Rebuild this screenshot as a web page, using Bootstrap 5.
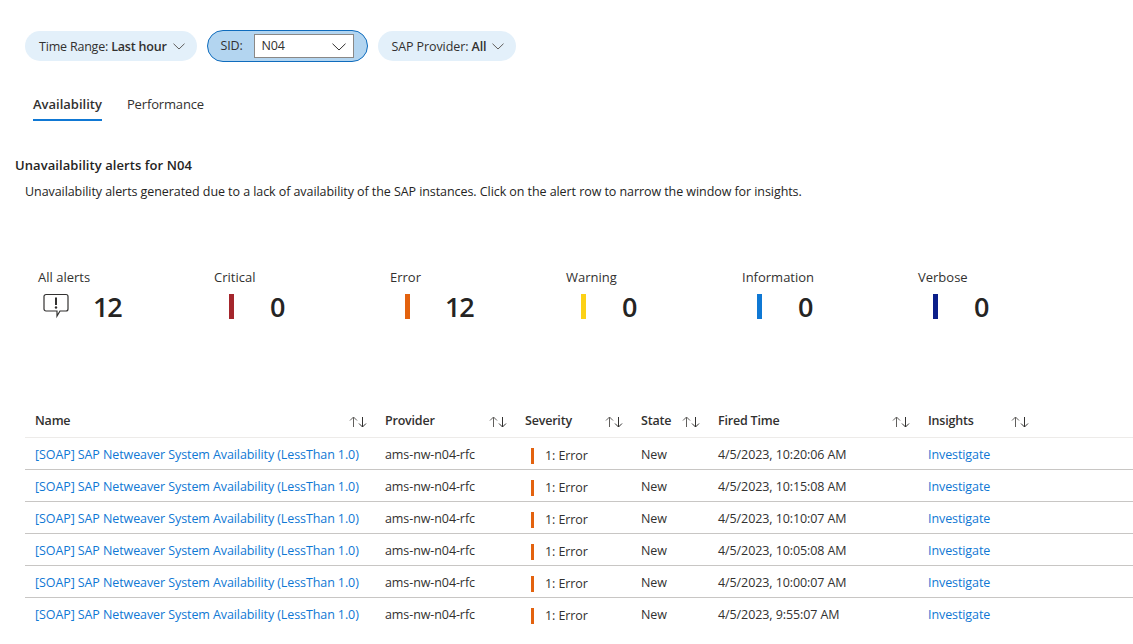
<!DOCTYPE html>
<html>
<head>
    <title>SAP Availability</title>
    <link rel="stylesheet" href="https://cdn.jsdelivr.net/npm/bootstrap@5.3.0/dist/css/bootstrap.min.css">
    <style>
        body { font-family: "Open Sans", "Noto Sans", sans-serif; font-size: 12.5px; color: #252423; background: #fff; overflow: hidden; height: 644px; }
        .filter-row { padding: 31px 0 0 25px; gap: 10px; height: 93px; }
        .pill { height: 30px; background: #e3f0fa; border-radius: 15px; padding: 2px 12px 0 14px; color: #323130; letter-spacing: -.2px; }
        .pill b { font-weight: 600; }
        .pill svg { margin-left: 6px; margin-top: -2px; }
        .pill-wide { letter-spacing: -.1px; padding-right: 12px; }
        .pill-active { height: 32px; margin-top: -1px; background: #b3d5f0; border: 1px solid #0f6cbd; border-radius: 16px; padding: 0 13px; color: #323130; letter-spacing: -.2px; }
        .sid-box { width: 100px; height: 24px; background: #fff; border: 1px solid #8a8886; margin-left: 11px; padding: 1px 7px 0; font-size: 12.5px; }
        .sid-box svg { margin: 0; }
        .tab-row { padding-left: 33px; gap: 25px; height: 41px; font-size: 13px; letter-spacing: -.15px; }
        .tab-item { height: 28px; padding-top: 2px; line-height: 18px; color: #323130; }
        .tab-on { font-weight: 600; border-bottom: 2px solid #0f78d4; letter-spacing: 0; }
        .sect-title { margin: 22px 0 0 15px; font-size: 13px; font-weight: 600; line-height: 18px; letter-spacing: .07px; }
        .sect-sub { margin: 9px 0 0 25px; line-height: 18px; letter-spacing: -.07px; }
        .tile-row { margin: 67px 0 0 38px; height: 55px; }
        .tile { width: 176px; }
        .tile-label { font-size: 13px; line-height: 18px; letter-spacing: 0; color: #323130; }
        .tile-body { height: 36px; margin-top: 2px; }
        .tile-mark { width: 35px; display: flex; justify-content: center; }
        .tile-mark svg { display: block; }
        .sev-bar { display: block; width: 5px; height: 25px; }
        .tile-num { margin-left: 20px; padding-top: 1px; font-size: 27px; font-weight: 600; line-height: 36px; letter-spacing: -1.2px; }
        .tile-zero { margin-left: 21px; }
        .alert-table { margin: 82px 0 0 25px; width: 1108px; table-layout: fixed; border-collapse: collapse; }
        .alert-table th { height: 32px; padding: 2px 8px 0 10px; font-weight: 600; border-bottom: 1px solid #edebe9; letter-spacing: -.2px; color: #323130; }
        .alert-table td { height: 32px; padding: 5px 0 0 10px; border-bottom: 1px solid #c8c6c4; white-space: nowrap; letter-spacing: -.09px; color: #323130; }
        .alert-table tbody tr:last-child td { border-bottom: 0; }
        .alert-table a { color: #0f78d4; text-decoration: none; }
        .sev-cell { display: flex; align-items: center; padding: 2px 0 0 6px; }
        .sev-mini { display: block; width: 3px; height: 16px; background: #e3620e; margin: 0 11px 2px 0; }
    </style>
</head>
<body>
<div class="filter-row d-flex align-items-start">
    <div class="pill d-flex align-items-center">Time Range:&nbsp;<b>Last hour</b>
        <svg width="12" height="7" viewBox="0 0 12 7"><path d="M.5.7 6 6l5.500-5.300" fill="none" stroke="#605e5c"/></svg>
    </div>
    <div class="pill-active d-flex align-items-center">SID:
        <div class="sid-box d-flex align-items-center justify-content-between">N04
            <svg width="14" height="8" viewBox="0 0 14 8"><path d="M.5.7 7 7l6.500-6.300" fill="none" stroke="#323130"/></svg>
        </div>
    </div>
    <div class="pill pill-wide d-flex align-items-center">SAP Provider:&nbsp;<b>All</b>
        <svg width="12" height="7" viewBox="0 0 12 7"><path d="M.5.7 6 6l5.500-5.300" fill="none" stroke="#605e5c"/></svg>
    </div>
</div>

<div class="tab-row d-flex">
    <div class="tab-item tab-on">Availability</div>
    <div class="tab-item">Performance</div>
</div>

<div class="sect-title">Unavailability alerts for N04</div>
<div class="sect-sub">Unavailability alerts generated due to a lack of availability of the SAP instances. Click on the alert row to narrow the window for insights.</div>

<div class="tile-row d-flex">
    <div class="tile">
        <div class="tile-label">All alerts</div>
        <div class="tile-body d-flex align-items-center">
            <div class="tile-mark">
                <svg width="26" height="26" viewBox="0 0 26 26"><path d="M3 1.500h20a2 2 0 0 1 2 2v12.500a2 2 0 0 1-2 2h-6l-3 5v-5h-11a2 2 0 0 1-2-2v-12.500a2 2 0 0 1 2-2z" fill="none" stroke="#323130" stroke-width="1.200"/><path d="M13 4.500v7.500" stroke="#323130" stroke-width="2"/><circle cx="13" cy="14.500" r="1.200" fill="#323130"/></svg>
            </div>
            <div class="tile-num">12</div>
        </div>
    </div>
    <div class="tile">
        <div class="tile-label">Critical</div>
        <div class="tile-body d-flex align-items-center">
            <div class="tile-mark"><span class="sev-bar" style="background:#a4262c"></span></div>
            <div class="tile-num tile-zero">0</div>
        </div>
    </div>
    <div class="tile">
        <div class="tile-label">Error</div>
        <div class="tile-body d-flex align-items-center">
            <div class="tile-mark"><span class="sev-bar" style="background:#e3620e"></span></div>
            <div class="tile-num">12</div>
        </div>
    </div>
    <div class="tile">
        <div class="tile-label">Warning</div>
        <div class="tile-body d-flex align-items-center">
            <div class="tile-mark"><span class="sev-bar" style="background:#fcd116"></span></div>
            <div class="tile-num tile-zero">0</div>
        </div>
    </div>
    <div class="tile">
        <div class="tile-label">Information</div>
        <div class="tile-body d-flex align-items-center">
            <div class="tile-mark"><span class="sev-bar" style="background:#0f78d4"></span></div>
            <div class="tile-num tile-zero">0</div>
        </div>
    </div>
    <div class="tile">
        <div class="tile-label">Verbose</div>
        <div class="tile-body d-flex align-items-center">
            <div class="tile-mark"><span class="sev-bar" style="background:#0b1f8a"></span></div>
            <div class="tile-num tile-zero">0</div>
        </div>
    </div>
</div>

<table class="alert-table">
    <colgroup>
        <col style="width:350px"><col style="width:140px"><col style="width:116px"><col style="width:77px"><col style="width:210px"><col style="width:119px"><col>
    </colgroup>
    <thead id="alertHead"></thead>
    <tbody id="alertRows"></tbody>
</table>

<script src="https://cdn.jsdelivr.net/npm/bootstrap@5.3.0/dist/js/bootstrap.bundle.min.js"></script>
<script>
    const sortIcon = '<svg width="18" height="14" viewBox="0 0 18 14"><path d="M4.500 12V2M1 5.500l3.500-3.500 3.500 3.500" fill="none" stroke="#605e5c"/><path d="M13.500 2v10M10 8.500l3.500 3.500 3.500-3.500" fill="none" stroke="#323130"/></svg>';
    const cols = ["Name", "Provider", "Severity", "State", "Fired Time", "Insights"];
    const times = ["10:20:06 AM", "10:15:08 AM", "10:10:07 AM", "10:05:08 AM", "10:00:07 AM", "9:55:07 AM"];

    let head = "<tr>";
    cols.forEach(c => {
        head += '<th><div class="d-flex align-items-center justify-content-between">' + c + sortIcon + "</div></th>";
    });
    document.getElementById("alertHead").innerHTML = head + "<th></th></tr>";

    let rows = "";
    times.forEach(t => {
        rows += '<tr><td><a href="#">[SOAP] SAP Netweaver System Availability (LessThan 1.0)</a></td>'
            + "<td>ams-nw-n04-rfc</td>"
            + '<td><div class="sev-cell"><span class="sev-mini"></span>1: Error</div></td>'
            + "<td>New</td>"
            + "<td>4/5/2023, " + t + "</td>"
            + '<td><a href="#">Investigate</a></td><td></td></tr>';
    });
    document.getElementById("alertRows").innerHTML = rows;
</script>
</body>
</html>
